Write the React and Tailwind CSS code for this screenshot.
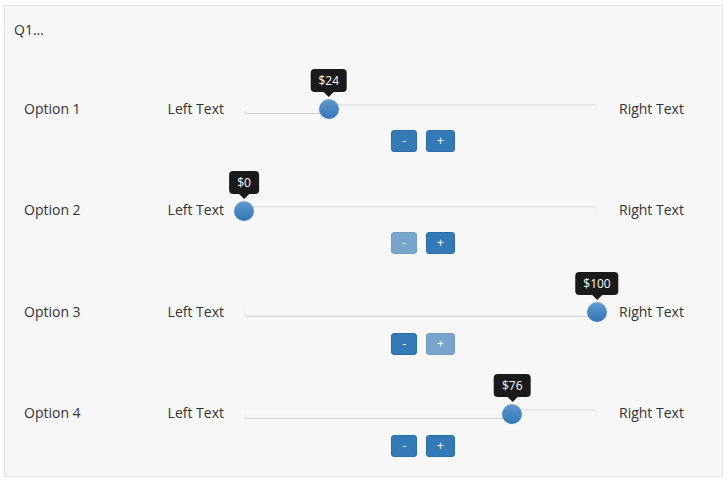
import { useState } from "react";

const rows = [
    { label: "Option 1", value: 24 },
    { label: "Option 2", value: 0 },
    { label: "Option 3", value: 100 },
    { label: "Option 4", value: 76 },
];

const Slider = ({ value }) => {
    return <div className="relative w-[353px] h-[20px]">
        <div className="absolute left-0 right-0 top-[5px] h-[10px] rounded-[4px] bg-gradient-to-b from-[#f5f5f5] to-[#f9f9f9] shadow-[inset_0_1px_2px_rgba(0,0,0,0.1)]" />
        <div className="absolute left-0 top-[5px] h-[10px] rounded-[4px] bg-gradient-to-b from-[#f9f9f9] to-[#f5f5f5] shadow-[inset_0_-1px_0_rgba(0,0,0,0.15)]"
            style={{ width: `${value}%` }} />
        <div className="absolute top-0 w-[20px] h-[20px] -ml-[10px] rounded-full bg-gradient-to-b from-[#5f99d0] to-[#3276b6] shadow-[inset_0_1px_0_rgba(255,255,255,0.2),0_1px_2px_rgba(0,0,0,0.05)]"
            style={{ left: `${value}%` }}>
            <div className="absolute bottom-[22px] left-1/2 -translate-x-1/2 flex flex-col items-center">
                <div className="bg-[#1a1a1a] text-white text-[12px] leading-[17px] px-[8px] py-[3px] rounded-[4px] whitespace-nowrap">
                    ${value}
                </div>
                <div className="w-0 h-0 border-x-[5px] border-x-transparent border-t-[5px] border-t-[#1a1a1a]" />
            </div>
        </div>
    </div>
};

const Btn = ({ children, disabled, onClick }) => {
    return <button disabled={disabled} onClick={onClick}
        className={`h-[22px] px-[10px] text-[12px] leading-[18px] text-white bg-[#337ab7] border border-[#2e6da4] rounded-[3px] ${disabled ? "opacity-65" : ""}`}>
        {children}
    </button>
};

const Row = ({ label, initial }) => {
    const [value, setValue] = useState(initial);

    return <div className="flex flex-col h-[101.67px] px-[19px] pt-[41px]">
        <div className="flex items-center h-[20px] text-[14px] text-[#333]">
            <div className="w-[120px] -mt-[2px]">{label}</div>
            <div className="w-[80px] text-right -mt-[2px]">Left Text</div>
            <div className="ml-[20px]">
                <Slider value={value} />
            </div>
            <div className="ml-[22px] -mt-[2px]">Right Text</div>
        </div>
        <div className="flex justify-center gap-[9px] mt-[11px] ml-[220px] w-[353px] pl-[5px]">
            <Btn disabled={value <= 0} onClick={() => setValue(Math.max(0, value - 1))}>-</Btn>
            <Btn disabled={value >= 100} onClick={() => setValue(Math.min(100, value + 1))}>+</Btn>
        </div>
    </div>
};

export default function App() {
    return <div className="min-h-[484px] bg-white pt-[5px] pl-[4px] font-['Open_Sans',sans-serif]">
        <div className="w-[719px] h-[472px] border border-[#e3e3e3] bg-[#f7f7f7]">
            <div className="pt-[14px] pl-[9px] pb-[18px] text-[14px] leading-5 text-[#333]">Q1...</div>
            { rows.map((r) => <Row key={r.label} label={r.label} initial={r.value} />) }
        </div>
    </div>
}
